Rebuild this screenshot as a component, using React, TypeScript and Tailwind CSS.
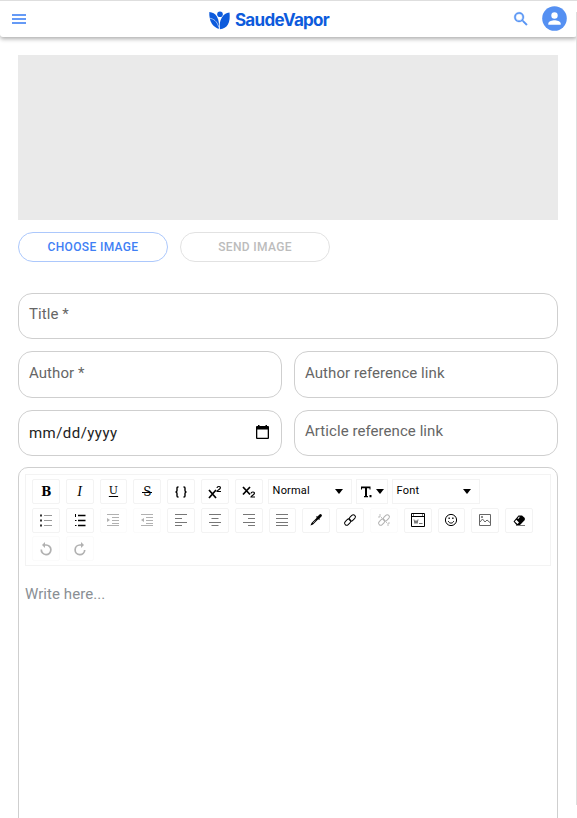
import React from "react";

type BoxProps = { children: React.ReactNode; faded?: boolean };

function Tool({ children, faded }: BoxProps) {
  return (
    <button
      className={`flex h-[25px] w-[27.8px] shrink-0 items-center justify-center rounded-[2px] border border-[#f3f3f3] text-black ${faded ? "opacity-30" : ""}`}
    >
      {children}
    </button>
  );
}

function Glyph({ children }: { children: React.ReactNode }) {
  return (
    <svg width="14" height="14" viewBox="0 0 14 14" fill="none" stroke="currentColor" strokeWidth="1">
      {children}
    </svg>
  );
}

function Caret() {
  return (
    <svg width="8" height="5" viewBox="0 0 8 5" fill="black">
      <path d="M0 0h8L4 5z" />
    </svg>
  );
}

function Field({ label, height, lift }: { label: string; height: string; lift: string }) {
  return (
    <div className={`flex items-center rounded-[14px] border border-[#cfcfcf] px-[10px] ${height}`}>
      <span className={`text-[15px] leading-5 tracking-[0.06px] text-[#666] ${lift}`}>{label}</span>
    </div>
  );
}

function Header() {
  return (
    <header className="flex h-[37px] items-center justify-between rounded-b-[3px] border-t border-[#dedede] bg-white pr-[10px] pl-3 shadow-[0_2px_4px_rgba(0,0,0,0.32)]">
      <svg width="14" height="10" viewBox="0 0 14 10" fill="#659af6">
        <path d="M0 0h14v2H0zM0 4h14v2H0zM0 8h14v2H0z" />
      </svg>
      <div className="flex items-center gap-[5px]">
        <svg width="21" height="19" viewBox="0 0 21 19" fill="#0d5bdc" className="mt-[2px]">
          <circle cx="11" cy="3.2" r="2.8" />
          <path d="M.3 1C3.600 1.200 6.200 2.800 7.700 5.300 9 7.500 9.800 10 10 13.500L9.700 18C6.800 16.800 4.500 15.300 2.900 12.800.8 9.500.1 5.500.3 1z" />
          <path d="M20.500 1.500C17 2 14.500 3.600 13 6.200c-1.300 2.200-2 4.300-2.300 7.300l.2 4.700c3.600-.2 6.300-1.900 8-4.700 1.900-3.200 2.100-7.500 1.600-12z" />
          <path d="M.2 7.200c4.400 .4 8 3.200 9.400 8.600" stroke="white" strokeWidth=".6" fill="none" />
        </svg>
        <span className="mt-[2px] font-[Inter] text-[17px] leading-6 font-bold tracking-[-0.68px] text-[#0d5bdc]">SaudeVapor</span>
      </div>
      <div className="flex items-center gap-[12px]">
        <svg width="18" height="18" viewBox="0 0 24 24" fill="#5794f4" stroke="#5794f4" strokeWidth=".5" className="-mt-px">
          <path d="M15.5 14h-.8l-.3-.3A6.5 6.5 0 1 0 13.7 14.4l.3.3v.8l5 5 1.5-1.5zm-6 0a4.5 4.5 0 1 1 0-9 4.5 4.5 0 0 1 0 9z" />
        </svg>
        <svg width="25" height="25" viewBox="0 0 25 25" className="-mt-px">
          <circle cx="12.5" cy="12.5" r="12.3" fill="#5590f2" />
          <circle cx="12.5" cy="9.5" r="3.2" fill="white" />
          <path d="M6.3 18.7v-1.3c0-2.1 4.1-3.2 6.2-3.2s6.2 1.1 6.2 3.2v1.3z" fill="white" />
        </svg>
      </div>
    </header>
  );
}

const lines = {
  left: "M1 1.5h12M1 5.5h7M1 9.5h12M1 12.5h7",
  center: "M1 1.5h12M3.5 5.5h7M1 9.5h12M3.5 12.5h7",
  right: "M1 1.5h12M6 5.5h7M1 9.5h12M6 12.5h7",
  full: "M1 1.5h12M1 5.5h12M1 9.5h12M1 12.5h12",
};

function Align({ kind }: { kind: keyof typeof lines }) {
  return (
    <Glyph>
      <path d={lines[kind]} stroke="#777" />
    </Glyph>
  );
}

function LinkShape() {
  return (
    <>
      <rect x="5.8" y="2.8" width="7" height="4.2" rx="2.1" transform="rotate(-45 9.3 4.9)" />
      <rect x="1.2" y="7" width="7" height="4.2" rx="2.1" transform="rotate(-45 4.7 9.1)" />
    </>
  );
}

function Toolbar() {
  return (
    <div className="flex h-[92px] flex-col gap-[3.5px] border border-[#f3f3f3] pt-[4px] pl-[6px]">
      <div className="flex gap-[6px]">
        <Tool><span className="mt-px ml-px font-['DejaVu_Serif'] text-[12px] font-bold">B</span></Tool>
        <Tool><span className="font-['Liberation_Serif'] text-[14px] italic">I</span></Tool>
        <Tool><span className="-mt-px font-['DejaVu_Serif'] text-[11px] underline underline-offset-[1.5px]">U</span></Tool>
        <Tool>
          <span className="relative font-['DejaVu_Serif'] text-[12px]">
            S
            <i className="absolute top-1/2 -left-px h-px w-[10px] bg-black" />
          </span>
        </Tool>
        <Tool>
          <Glyph><path d="M4.500 2H4Q3 2 3 3v2.500Q3 7 1.500 7 3 7 3 8.500V11q0 1 1 1h.5M9.500 2h.5q1 0 1 1v2.500Q11 7 12.500 7 11 7 11 8.500V11q0 1-1 1h-.5" strokeWidth="1.4" /></Glyph>
        </Tool>
        <Tool>
          <Glyph><path d="m1 5 7 8M8 5l-7 8" strokeWidth="1.7" /><path d="M9 3c.2-2 4-2 3.300 .2C12 4.500 9 5 9 6.500h4" strokeWidth="1.2" /></Glyph>
        </Tool>
        <Tool>
          <Glyph><path d="m1 2 7 7.500M8 2 1 9.500" strokeWidth="1.7" /><path d="M9 8.500c.2-2 4-2 3.300 .2C12 10 9 10.500 9 12h4" strokeWidth="1.2" /></Glyph>
        </Tool>
        <div className="-ml-px flex gap-1">
          <div className="flex h-[25px] w-[84px] items-center justify-between border border-[#f3f3f3] pr-[8px] pl-1 text-[11px] tracking-[0.2px]"><span>Normal</span><Caret /></div>
          <div className="flex h-[25px] w-8 items-center justify-between border border-[#f3f3f3] pr-[3px] pl-1">
            <svg width="11" height="12" viewBox="0 0 11 12"><path d="M0 .5h9.500v3H8.500V2.200H6V10h1v1.300H3V10h1V2.200H1v1.300H0zM8.500 9h2v2.300h-2z" /></svg>
            <Caret />
          </div>
          <div className="flex h-[25px] w-[88px] items-center justify-between border border-[#f3f3f3] pr-[8px] pl-1 text-[11px] tracking-[0.2px]"><span>Font</span><Caret /></div>
        </div>
      </div>
      <div className="flex gap-[6px]">
        <Tool><Glyph><path d="M1 2.500h2M1 7.500h2M1 12.500h2" stroke="#333" strokeWidth="1.800" /><path d="M5 2.500h8M5 7.500h8M5 12.500h8" stroke="#999" /></Glyph></Tool>
        <Tool><Glyph><path d="M2.500 1v3M2 7.500h1.500M2 12.500h1.500" /><path d="M5 2.500h7.500M5 7.500h7.500M5 12.500h7.500" strokeWidth="1.300" /></Glyph></Tool>
        <Tool faded><Glyph><path d="M1 1.500h12M6 4.500h7M6 7.500h7M6 10.500h7M1 12.500h12" /><path d="m1 5 3 2-3 2z" fill="currentColor" stroke="none" /></Glyph></Tool>
        <Tool faded><Glyph><path d="M1 1.500h12M6 4.500h7M6 7.500h7M6 10.500h7M1 12.500h12" /><path d="M4 5 1 7l3 2z" fill="currentColor" stroke="none" /></Glyph></Tool>
        <Tool><Align kind="left" /></Tool>
        <Tool><Align kind="center" /></Tool>
        <Tool><Align kind="right" /></Tool>
        <Tool><Align kind="full" /></Tool>
        <Tool><Glyph><path d="m1.500 12.500 1-2.500 6-6L10 5.500l-6 6z" fill="currentColor" stroke="none" /><path d="m7.500 3.500 3 3" strokeWidth="1.300" /><path d="M9.500 4.500 11.500 2.500" strokeWidth="2.800" strokeLinecap="round" /><path d="m4 10 2.500-2.500" stroke="white" strokeWidth=".5" /></Glyph></Tool>
        <Tool><Glyph><LinkShape /></Glyph></Tool>
        <Tool faded><Glyph><LinkShape /><path d="M3 1v3M1 4h2M11 10v3M11 10h2M4 4l1 1M9 9l1 1" strokeWidth=".8" /></Glyph></Tool>
        <Tool><Glyph><path d="M.5.500h13v13H.5zM.5 3.500h13M2 2h1M11 2h1" /><path d="m3 6.500 1 4 1-3 1 3 1-4M8 10.500h3.500" strokeWidth=".7" stroke="#333" /></Glyph></Tool>
        <Tool><Glyph><circle cx="7" cy="7" r="5.600" /><path d="M4.300 8.200c1 2.500 4.500 2.500 5.400 0" /><path d="M4.500 5.200h1.300M8.200 5.200h1.300" strokeWidth="1.400" /></Glyph></Tool>
        <Tool><Glyph><path d="M1.500 1.500h11v11h-11zM2 9l2.500-3L7 9l2-2 3.500 3" stroke="#666" /><circle cx="4" cy="4" r=".7" stroke="#666" /></Glyph></Tool>
        <Tool><Glyph><path d="m1.500 8.500 5-6H10l2.800 2.500v2L8 12H4.500z" fill="currentColor" stroke="none" /><path d="m2.800 8.500 1.500-1.800L7 9.500 5.500 11zM5.500 5.500l1.500-2 .8.500-1.500 2z" fill="white" stroke="none" /><path d="M4 12.500h9" stroke="#777" /></Glyph></Tool>
      </div>
      <div className="flex gap-[6px]">
        <Tool faded><Glyph><path d="M2.300 7.500A4.800 4.800 0 1 0 7 3H5" strokeWidth="1.700" /><path d="m6 0-3 3 3 3z" fill="currentColor" stroke="none" /></Glyph></Tool>
        <Tool faded><Glyph><path d="M11.700 8A4.800 4.800 0 1 1 7 3h2" strokeWidth="1.700" /><path d="m8 0 3 3-3 3z" fill="currentColor" stroke="none" /></Glyph></Tool>
      </div>
    </div>
  );
}

export default function App() {
  return (
    <div className="relative h-[818px] w-[577px] overflow-hidden bg-white font-[Roboto,sans-serif]">
      <Header />
      <div className="absolute top-3 right-0 h-[793px] w-px bg-[#dedede]" />
      <main className="pt-[18px] pr-[19px] pl-[18px]">
        <div className="h-[164.5px] bg-[#eaeaea]" />
        <div className="mt-[12.5px] flex gap-3 text-[12px] font-medium tracking-[0.35px]">
          <button className="h-[30px] w-[150px] rounded-full border border-[#acc8fc] text-[#3f7ff5]">CHOOSE IMAGE</button>
          <button className="h-[30px] w-[150px] rounded-full border border-[#e2e2e2] text-[#bcbcbc]">SEND IMAGE</button>
        </div>
        <div className="mt-[31px] flex flex-col gap-3">
          <Field label="Title *" height="h-[46px]" lift="-mt-[4px]" />
          <div className="grid grid-cols-2 gap-3">
            <Field label="Author *" height="h-[47px]" lift="-mt-[3px]" />
            <Field label="Author reference link" height="h-[47px]" lift="-mt-[3px]" />
          </div>
          <div className="grid grid-cols-2 gap-3">
            <div className="flex h-[46px] items-center justify-between rounded-[14px] border border-[#cfcfcf] pr-[12px] pl-[10px]">
              <span className="text-[15px] leading-5 tracking-[0.45px] text-[#222]">mm/dd/yyyy</span>
              <svg width="13" height="14" viewBox="0 0 13 14" className="-mt-[2px]"><path d="M2 0h1.500v1h6V0H11v1h1q1 0 1 1v11q0 1-1 1H1q-1 0-1-1V2q0-1 1-1h1zM1.300 4.500v8.200h10.400V4.500z" fillRule="evenodd" /></svg>
            </div>
            <Field label="Article reference link" height="h-[46px]" lift="-mt-[4px]" />
          </div>
          <section className="-mt-px h-[370px] rounded-t-[10px] border border-[#cfcfcf] px-[6px] pt-[6px]">
            <Toolbar />
            <p className="mt-[18px] text-[15px] leading-5 tracking-[0.06px] text-[#8a8f94]">Write here...</p>
          </section>
        </div>
      </main>
    </div>
  );
}
